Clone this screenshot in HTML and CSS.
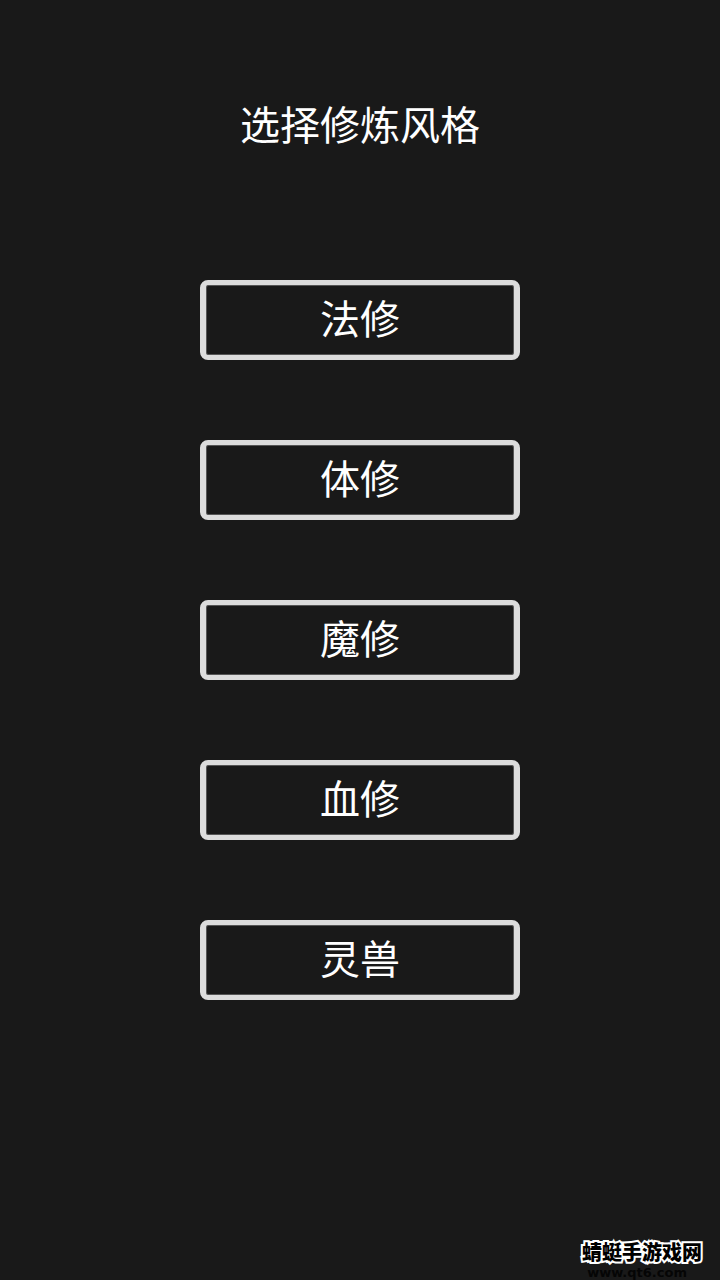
FILE: index.html
```html
<!DOCTYPE html>
<html lang="zh-CN">
<head>
<meta charset="utf-8">
<meta name="viewport" content="width=device-width, initial-scale=1">
<title>选择修炼风格</title>
<link rel="stylesheet" href="styles.css">
</head>
<body>
<main class="screen">
  <h1 class="title">选择修炼风格</h1>
  <div class="options">
    <button class="option" type="button">法修</button>
    <button class="option" type="button">体修</button>
    <button class="option" type="button">魔修</button>
    <button class="option" type="button">血修</button>
    <button class="option" type="button">灵兽</button>
  </div>
</main>
<footer class="credit">
  <span class="site-name">蜻蜓手游戏网</span>
  <span class="site-url">www.qt6.com</span>
</footer>
</body>
</html>
```
FILE: styles.css
```css
* {
  box-sizing: border-box;
}

body {
  margin: 0;
  min-height: 100vh;
  display: flex;
  flex-direction: column;
  background: #191919;
  color: #fff;
  font-family: "Noto Sans CJK SC", sans-serif;
}

.screen {
  flex: 1;
  display: flex;
  flex-direction: column;
  align-items: center;
  padding: 93px 20px 40px;
}

.title {
  margin: 0 0 127px;
  font-size: 40px;
  line-height: 60px;
  font-weight: 400;
}

.options {
  width: 100%;
  max-width: 320px;
  display: grid;
  gap: 80px;
}

.option {
  height: 80px;
  padding: 0 0 6px;
  border: solid #dcdcdc;
  border-width: 5px 6px;
  border-radius: 8px;
  box-shadow: inset 0 0 0 1px #555;
  background: transparent;
  color: inherit;
  font: inherit;
  font-size: 40px;
  line-height: 60px;
}

.credit {
  display: flex;
  flex-direction: column;
  align-items: flex-end;
  padding-right: 18px;
}

.site-name {
  font-family: "Liberation Sans", "Noto Sans CJK SC", sans-serif;
  font-size: 20px;
  line-height: 24px;
  font-weight: 900;
  color: #000;
  -webkit-text-stroke: 4px #fff;
  paint-order: stroke fill;
}

.site-url {
  padding-right: 15px;
  font-family: "DejaVu Sans", sans-serif;
  font-size: 13px;
  line-height: 15px;
  font-weight: 700;
  color: #050505;
}
```
